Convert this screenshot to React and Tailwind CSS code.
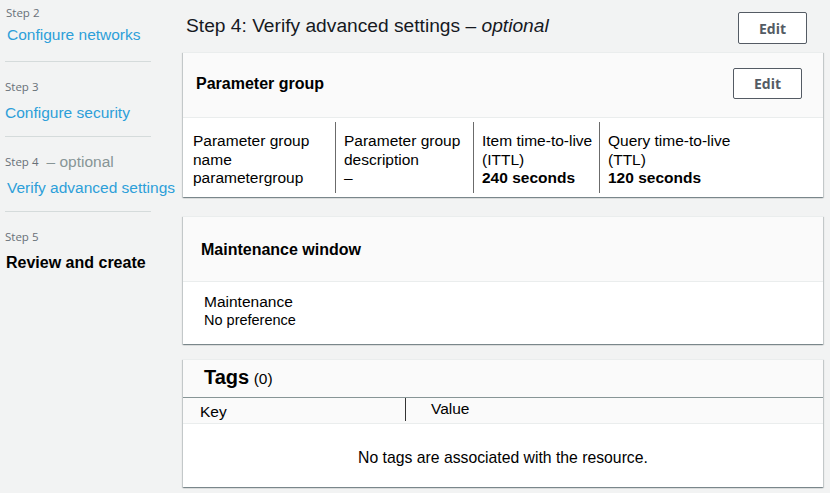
import React from "react";

const card =
  "bg-white border-t border-[#eaeded] shadow-[0_1px_1px_0_rgba(0,28,36,0.3),1px_1px_1px_0_rgba(0,28,36,0.15),-1px_1px_1px_0_rgba(0,28,36,0.15)]";

const EditButton = ({ className = "" }) => (
  <button
    className={`w-[69px] shrink-0 bg-white border border-[#545b64] rounded-[2px] text-[14px] font-bold text-[#545b64] font-['Open_Sans',sans-serif] ${className}`}
  >
    Edit
  </button>
);

const StepLabel = ({ children }) => (
  <div className="h-4 leading-4 text-[11.5px] text-[#687078] font-['Open_Sans',sans-serif]">
    {children}
  </div>
);

const Sidebar = () => (
  <aside className="w-[183px] shrink-0 font-['Liberation_Sans',Arial,sans-serif]">
    <div className="pt-[5px] pb-[17px] border-b border-[#d5dbdb] ml-[5px] w-[146px]">
      <div className="ml-[1px]">
        <StepLabel>Step 2</StepLabel>
      </div>
      <div className="mt-[5px] h-[18px] leading-[18px] text-[15.5px] text-[#2d9fd9] ml-[2px] whitespace-nowrap">
        Configure networks
      </div>
    </div>
    <div className="pt-[17px] pb-[14px] border-b border-[#d5dbdb] ml-[5px] w-[146px]">
      <StepLabel>Step 3</StepLabel>
      <div className="mt-[9px] h-[18px] leading-[18px] text-[15.5px] text-[#2d9fd9] whitespace-nowrap">
        Configure security
      </div>
    </div>
    <div className="pt-[17px] pb-[14px] border-b border-[#d5dbdb] ml-[5px] w-[146px]">
      <div className="flex items-center gap-[8px] h-4">
        <StepLabel>Step 4</StepLabel>
        <span className="text-[15.5px] text-[#879596] leading-4">– optional</span>
      </div>
      <div className="mt-[9px] h-[18px] leading-[18px] text-[15.5px] text-[#2d9fd9] ml-[2px] whitespace-nowrap">
        Verify advanced settings
      </div>
    </div>
    <div className="pt-[17px] ml-[5px] w-[146px]">
      <StepLabel>Step 5</StepLabel>
      <div className="mt-[9px] h-[18px] leading-[18px] text-[16px] font-bold text-black ml-[1px] whitespace-nowrap">
        Review and create
      </div>
    </div>
  </aside>
);

const Field = ({ first, children }) => (
  <div
    className={`pt-[10px] pb-[5px] ${first ? "pl-[10px]" : "pl-[8px] border-l border-[#6b6b6b]"}`}
  >
    {children}
  </div>
);

export default function App() {
  return (
    <div className="w-[830px] h-[493px] overflow-hidden bg-[#f2f3f3] flex font-['Liberation_Sans',Arial,sans-serif] text-[#16191f]">
      <Sidebar />
      <main className="w-[640px] shrink-0">
        <div className="flex items-center justify-between pt-[12px] pl-[3px] pr-[16px] h-[44px]">
          <h1 className="text-[19.2px] leading-[32px] text-[#16191f] -mt-[5px] whitespace-nowrap">
            Step 4: Verify advanced settings – <i>optional</i>
          </h1>
          <EditButton className="h-[32px]" />
        </div>

        <section className={`${card} mt-[8px]`}>
          <div className="h-[65px] bg-[#fafafa] border-b border-[#eaeded] flex items-center justify-between pl-[13px] pr-[21px]">
            <h2 className="text-[16px] font-bold text-black -mt-[2px]">Parameter group</h2>
            <EditButton className="h-[31px] -mt-[3px]" />
          </div>
          <div className="grid grid-cols-[152px_138px_126px_1fr] pt-[4px] pb-[4px] text-[15.5px] leading-[18.5px] text-black">
            <Field first>
              <div>Parameter group</div>
              <div>name</div>
              <div>parametergroup</div>
            </Field>
            <Field>
              <div>Parameter group</div>
              <div>description</div>
              <div>–</div>
            </Field>
            <Field>
              <div>Item time-to-live</div>
              <div>(ITTL)</div>
              <div className="font-bold">240 seconds</div>
            </Field>
            <Field>
              <div>Query time-to-live</div>
              <div>(TTL)</div>
              <div className="font-bold">120 seconds</div>
            </Field>
          </div>
        </section>

        <section className={`${card} mt-[19px]`}>
          <div className="h-[65px] bg-[#fafafa] border-b border-[#eaeded] flex items-center pl-[18px]">
            <h2 className="text-[16px] font-bold text-black mt-[2px]">Maintenance window</h2>
          </div>
          <div className="h-[62px] pl-[21px] pt-[11px] text-black">
            <div className="text-[15.5px] leading-[18px]">Maintenance</div>
            <div className="text-[14.5px] leading-[18px]">No preference</div>
          </div>
        </section>

        <section className={`${card} mt-[15px]`}>
          <div className="h-[38px] bg-[#fafafa] border-b border-[#879596] flex items-center pl-[21px]">
            <h2 className="text-black -mt-[3px]">
              <span className="text-[20px] font-bold">Tags</span>{" "}
              <span className="text-[15.5px]">(0)</span>
            </h2>
          </div>
          <div className="h-[26px] bg-[#fafafa] border-b border-[#eaeded] flex text-[15.5px] text-black">
            <div className="w-[223px] pl-[17px] pt-[5px] border-r border-[#333] h-[23px] leading-[18px]">
              Key
            </div>
            <div className="pl-[25px] pt-[2px] leading-[18px]">Value</div>
          </div>
          <div className="h-[63px] flex items-center justify-center text-[15.75px] text-black pt-[6px]">
            No tags are associated with the resource.
          </div>
        </section>
      </main>
    </div>
  );
}
